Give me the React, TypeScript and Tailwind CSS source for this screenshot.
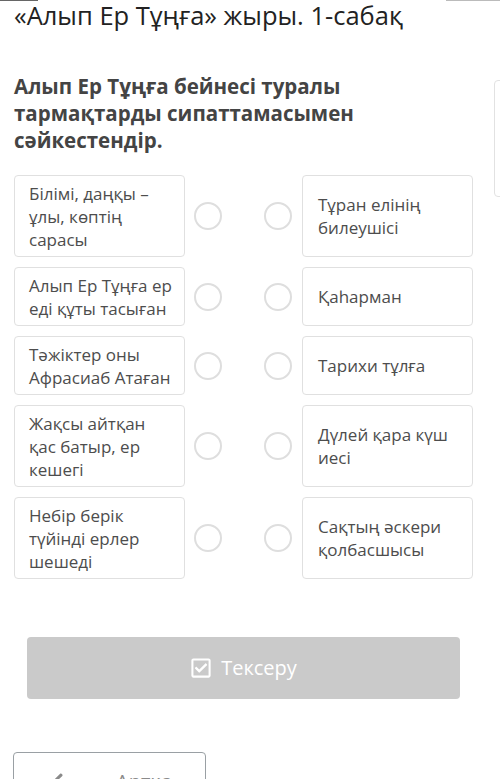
import React from 'react'
import { FaRegCheckSquare, FaArrowLeft } from 'react-icons/fa'

const pairs = [
  { left: ['Білімі, даңқы –', 'ұлы, көптің', 'сарасы'], right: ['Тұран елінің', 'билеушісі'] },
  { left: ['Алып Ер Тұңға ер', 'еді құты тасыған'], right: ['Қаһарман'] },
  { left: ['Тәжіктер оны', 'Афрасиаб Атаған'], right: ['Тарихи тұлға'] },
  { left: ['Жақсы айтқан', 'қас батыр, ер', 'кешегі'], right: ['Дүлей қара күш', 'иесі'] },
  { left: ['Небір берік', 'түйінді ерлер', 'шешеді'], right: ['Сақтың әскери', 'қолбасшысы'] },
]

const Lines = ({ lines }: { lines: string[] }) => (
  <>
    {lines.map((l, i) => (
      <span key={i} className="block whitespace-nowrap">
        {l}
      </span>
    ))}
  </>
)

const Radio = () => (
  <div className="w-[28px] h-[28px] shrink-0 rounded-full border-2 border-[#dedede] bg-white" />
)

const App = () => {
  return (
    <div className="relative w-[500px] h-[779px] overflow-hidden bg-white font-['Open_Sans',sans-serif]">
      {/* bits of the surrounding page */}
      <div className="absolute top-0 left-0 w-[38px] h-px bg-[#666]" />
      <div className="absolute top-0 left-[446px] w-[54px] h-px bg-[#bbb]" />
      <div className="absolute top-[80px] left-[494px] w-[20px] h-[117px] rounded border border-[#e2e2e2]" />

      <h1 className="pt-px pl-[14px] text-[25.5px] leading-[29px] text-[#222] whitespace-nowrap">
        «Алып Ер Тұңға» жыры. 1-сабақ
      </h1>

      <p className="mt-[43px] pl-[14px] text-[20.5px] leading-[27px] font-bold text-[#444] whitespace-nowrap">
        Алып Ер Тұңға бейнесі туралы
        <br />
        тармақтарды сипаттамасымен
        <br />
        сәйкестендір.
      </p>

      {/* matching rows */}
      <div className="mt-[21px] pl-[14px] flex flex-col gap-[10px]">
        {pairs.map((p, i) => (
          <div key={i} className="flex items-stretch">
            <div className="w-[171px] flex flex-col justify-center rounded border border-[#e0e0e0] px-[14px] py-[5.5px] text-[17px] leading-[23px] text-[#4d4d4d]">
              <Lines lines={p.left} />
            </div>
            <div className="flex items-center ml-[9px]">
              <Radio />
            </div>
            <div className="flex items-center ml-[42px]">
              <Radio />
            </div>
            <div className="ml-[10px] w-[171px] flex flex-col justify-center rounded border border-[#e0e0e0] pl-[15px] pr-[10px] py-[5.5px] text-[17px] leading-[23px] text-[#4d4d4d]">
              <Lines lines={p.right} />
            </div>
          </div>
        ))}
      </div>

      {/* check button */}
      <button className="mt-[58px] ml-[27px] w-[433px] h-[62px] rounded bg-[#cacaca] flex items-center justify-center gap-[9px] text-white">
        <FaRegCheckSquare className="w-[22px] h-[22px]" />
        <span className="text-[20px] leading-none">Тексеру</span>
      </button>

      {/* back button */}
      <button className="mt-[53px] ml-[13px] w-[193px] h-[60px] rounded border border-[#9aa0a4] bg-white flex items-center text-[#8a8a8a]">
        <FaArrowLeft className="ml-[37px] w-[20px] h-[20px]" />
        <span className="ml-[45px] text-[20px] leading-none">Артқа</span>
      </button>
    </div>
  )
}

export default App
